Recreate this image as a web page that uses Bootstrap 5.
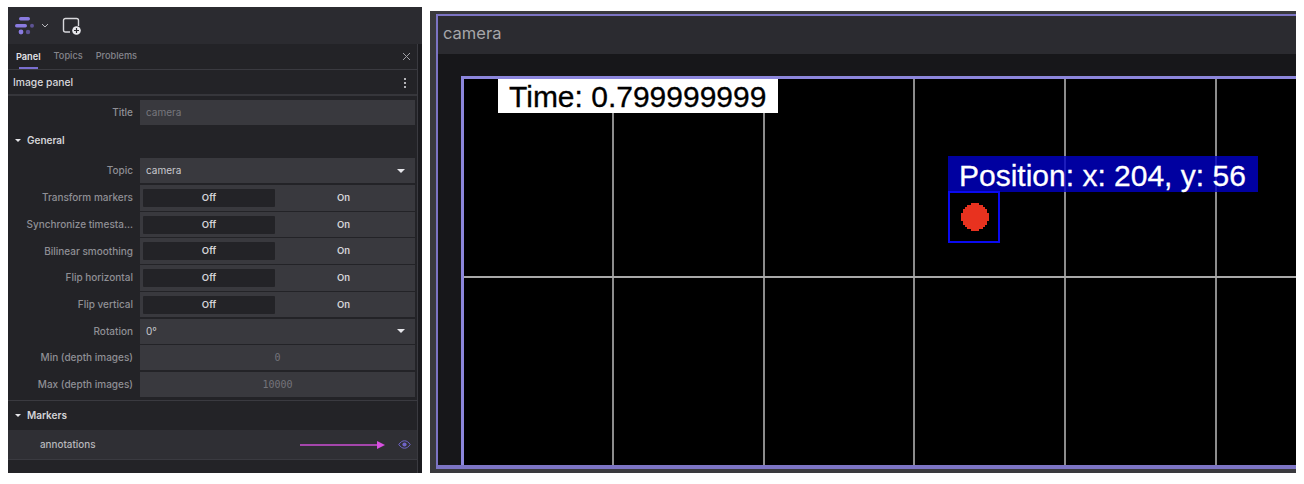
<!DOCTYPE html>
<html lang="en">
<head>
  <meta charset="UTF-8">
  <title>Image panel</title>
  <link href="https://cdn.jsdelivr.net/npm/bootstrap@5.3.3/dist/css/bootstrap.min.css" rel="stylesheet">
  <style>
    html, body { height: 484px; overflow: hidden; background: #fff; }
    body { font-family: Inter, "Liberation Sans", sans-serif; font-size: 10px; color: #d4d4d8; }
    .shot { padding: 7px 8px 11px 8px; height: 484px; gap: 8px; }

    /* left side */
    .side { width: 414px; flex: none; background: #232327; display: flex; flex-direction: column; }
    .topbar { height: 37px; background: #2b2b30; padding-left: 7px; gap: 4px; flex: none; }
    .side-body { flex: 1; display: flex; min-height: 0; }
    .side-main { width: 410px; background: #232327; border-right: 1px solid #3a3a40; display: flex; flex-direction: column; }
    .side-gutter { width: 4px; background: #1b1b1f; }
    .tabs { height: 26px; padding: 0 6px 1px 8px; gap: 13px; border-bottom: 1px solid #3a3a40; flex: none; color: #85858c; font-weight: 500; font-size: 9.2px; }
    .tabs b { color: #e2e2e6; font-weight: 600; position: relative; line-height: 25px; margin-bottom: -1px; }
    .tabs b::after { content: ""; position: absolute; left: 3px; right: 3px; bottom: 0; height: 2px; background: #7a6fd0; }
    .panel-head { height: 26px; padding: 1px 11px 0 5px; border-bottom: 2px solid #36363b; font-size: 10.3px; font-weight: 500; color: #d8d8dc; flex: none; }
    .dots { gap: 2px; }
    .dots i { display: block; width: 2px; height: 2px; background: #e4e4e8; border-radius: 50%; }
    .field-row { display: flex; align-items: center; padding-right: 2px; flex: none; }
    .field-name { width: 132px; text-align: right; padding-right: 7px; color: #8f8f95; font-weight: 500; font-size: 10px; white-space: nowrap; flex: none; }
    .field-box { flex: 1; background: #39393e; height: 100%; display: flex; align-items: center; padding: 0 6px; }
    .dim { color: #77777d; }
    .num { justify-content: center; font-family: "DejaVu Sans Mono", monospace; font-size: 10px; color: #74747a; }
    .caret-down { width: 0; height: 0; border-left: 4px solid transparent; border-right: 4px solid transparent; border-top: 4px solid #e6e6ea; }
    .group-head .caret-down { border-left-width: 3.5px; border-right-width: 3.5px; border-top-width: 3.5px; }
    .picker { justify-content: space-between; padding-right: 10px; color: #c9c9ce; }
    .switch { padding: 3px; font-weight: 600; font-size: 9.5px; color: #d4d4d8; }
    .switch span { flex: 1; text-align: center; line-height: 18px; }
    .switch .off { flex: none; width: 132px; background: #232327; border-radius: 1px; }
    .group-head { gap: 6px; padding-left: 7px; font-weight: 600; font-size: 10px; color: #d4d4d8; flex: none; }
    .general-head { height: 33px; padding-bottom: 2px; }
    .markers-head { height: 30px; margin-top: 3.5px; border-top: 1px solid #3a3a40; }
    .h25 { height: 25px; }
    .h26 { height: 25.7px; margin-top: 1px; }
    .first-switch { margin-top: 2px; }
    .gap-rot { margin-top: 1.5px; }
    .gap-min { margin-top: 1px; }
    .gap-max { margin-top: 2px; }
    .title-row { margin-top: 4px; }
    .marker-row { height: 30px; background: #2f2f34; border-bottom: 1px solid #3a3a40; padding: 0 6px 1px 32px; flex: none; color: #b8b8bd; font-size: 9.9px; font-weight: 500; }
    .arrow-mark { margin-top: 1px; }

    /* right side */
    .viewer { flex: 1; margin-top: 4px; background: #3a3a3e; padding: 3px 0 4px 6px; display: flex; }
    .viewer-in { flex: 1; border: solid #7c74c4; border-width: 2px 0 4px 2px; background: #17171a; display: flex; flex-direction: column; }
    .viewer-title { height: 38px; background: #2b2b30; padding: 0 0 3px 5px; font-size: 16.5px; color: #a6a6aa; flex: none; }
    .viewer-gap { flex: 1; padding: 22px 0 0 23px; display: flex; min-height: 0; }
    .canvas { flex: 1; position: relative; background: #000; border: solid #8c86dc; border-width: 3px 0 0 3px; overflow: hidden; }
    .v-line { position: absolute; top: 0; bottom: 0; width: 2px; background: #8c8c8c; }
    .vl1 { left: 148px; } .vl2 { left: 299px; } .vl3 { left: 449px; } .vl4 { left: 600px; } .vl5 { left: 751px; }
    .h-line { position: absolute; left: 0; right: 0; height: 2px; top: 197px; background: #a8a8a8; }
    .time-tag { position: absolute; left: 34px; top: 0; width: 280px; height: 34px; background: #fff; color: #000; font: 30px/35px "Liberation Sans", sans-serif; padding-left: 11px; white-space: nowrap; -webkit-text-stroke: .3px; }
    .pos-tag { position: absolute; left: 484px; top: 77px; width: 310px; height: 36px; background: rgba(0,0,200,.8); color: #fff; font: 30px/40px "Liberation Sans", sans-serif; padding-left: 11px; white-space: nowrap; -webkit-text-stroke: .3px; }
    .pos-box { position: absolute; left: 484px; top: 112px; width: 52px; height: 52px; border: 2px solid #0a0af0; }
    .ball { position: absolute; left: 497px; top: 124px; }
  </style>
</head>
<body>
  <div class="shot d-flex">
    <div class="side">
      <div class="topbar d-flex align-items-center">
        <svg width="22" height="20" viewBox="0 0 22 20" fill="#8a7be0">
          <rect x="4" y="1" width="11" height="3.4" rx="1.7"/>
          <rect x="0" y="8" width="12" height="3.4" rx="1.7"/>
          <circle cx="17" cy="9.7" r="2" fill="#5d5394"/>
          <circle cx="6" cy="16" r="2.4"/>
          <circle cx="13" cy="16" r="2.2" fill="#5d5394"/>
        </svg>
        <svg width="8" height="6" viewBox="0 0 8 6" fill="none" stroke="#b8b8bd" stroke-width="1"><path d="M1 1l3 3 3-3"/></svg>
        <svg class="ms-2" width="22" height="20" viewBox="0 0 22 20" fill="none">
          <path d="M9 16H4.500a2 2 0 0 1-2-2V4.500a2 2 0 0 1 2-2h11a2 2 0 0 1 2 2V10" stroke="#d8d8dc" stroke-width="1.400"/>
          <circle cx="15.500" cy="14.500" r="4.300" fill="#e8e8ec"/>
          <path d="M15.500 12v5M13 14.500h5" stroke="#2b2b30" stroke-width="1.200"/>
        </svg>
      </div>
      <div class="side-body">
        <div class="side-main">
          <div class="tabs d-flex align-items-center">
            <b>Panel</b><span>Topics</span><span>Problems</span>
            <svg class="ms-auto" width="9" height="9" viewBox="0 0 9 9" stroke="#a0a0a5" stroke-width="1"><path d="M1 1l7 7M8 1l-7 7"/></svg>
          </div>
          <div class="panel-head d-flex align-items-center justify-content-between">
            <span>Image panel</span>
            <span class="dots d-flex flex-column"><i></i><i></i><i></i></span>
          </div>
          <div class="field-row h25 title-row"><div class="field-name">Title</div><div class="field-box dim">camera</div></div>
          <div class="group-head general-head d-flex align-items-center"><span class="caret-down"></span>General</div>
          <div class="field-row h25"><div class="field-name">Topic</div><div class="field-box picker">camera<span class="caret-down"></span></div></div>
          <div class="field-row h26 first-switch"><div class="field-name">Transform markers</div><div class="field-box switch"><span class="off">Off</span><span>On</span></div></div>
          <div class="field-row h26"><div class="field-name">Synchronize timesta...</div><div class="field-box switch"><span class="off">Off</span><span>On</span></div></div>
          <div class="field-row h26"><div class="field-name">Bilinear smoothing</div><div class="field-box switch"><span class="off">Off</span><span>On</span></div></div>
          <div class="field-row h26"><div class="field-name">Flip horizontal</div><div class="field-box switch"><span class="off">Off</span><span>On</span></div></div>
          <div class="field-row h26"><div class="field-name">Flip vertical</div><div class="field-box switch"><span class="off">Off</span><span>On</span></div></div>
          <div class="field-row h25 gap-rot"><div class="field-name">Rotation</div><div class="field-box picker">0°<span class="caret-down"></span></div></div>
          <div class="field-row h25 gap-min"><div class="field-name">Min (depth images)</div><div class="field-box num">0</div></div>
          <div class="field-row h25 gap-max"><div class="field-name">Max (depth images)</div><div class="field-box num">10000</div></div>
          <div class="group-head markers-head d-flex align-items-center"><span class="caret-down"></span>Markers</div>
          <div class="marker-row d-flex align-items-center justify-content-between">
            <span>annotations</span>
            <span class="arrow-mark d-flex align-items-center gap-2">
              <svg width="86" height="8" viewBox="0 0 86 8" fill="#d850e0"><rect x="0" y="3.300" width="78" height="1.400"/><path d="M77 0l8 4-8 4z"/></svg>
              <svg class="ms-1" width="13" height="9" viewBox="0 0 13 9" fill="none"><path d="M.8 4.500C2.500 2 4.300.8 6.500.8s4 1.200 5.700 3.700c-1.700 2.500-3.500 3.700-5.700 3.700S2.500 7 .8 4.500z" stroke="#6f64c8" stroke-width="1"/><circle cx="6.500" cy="4.500" r="2.100" fill="#6f64c8"/></svg>
            </span>
          </div>
        </div>
        <div class="side-gutter"></div>
      </div>
    </div>

    <div class="viewer">
      <div class="viewer-in">
        <div class="viewer-title d-flex align-items-center">camera</div>
        <div class="viewer-gap">
          <div class="canvas">
            <div class="v-line vl1"></div>
            <div class="v-line vl2"></div>
            <div class="v-line vl3"></div>
            <div class="v-line vl4"></div>
            <div class="v-line vl5"></div>
            <div class="h-line"></div>
            <div class="time-tag">Time: 0.799999999</div>
            <div class="pos-tag">Position: x: 204, y: 56</div>
            <div class="pos-box"></div>
            <svg class="ball" width="28" height="28" viewBox="0 0 14 14" fill="#e8321f" shape-rendering="crispEdges"><path d="M5 0h4v1h2v1h1v1h1v2h1v4h-1v2h-1v1h-1v1h-2v1H5v-1H3v-1H2v-1H1V9H0V5h1V3h1V2h1V1h2z"/></svg>
          </div>
        </div>
      </div>
    </div>
  </div>
  <script src="https://cdn.jsdelivr.net/npm/bootstrap@5.3.3/dist/js/bootstrap.bundle.min.js"></script>
</body>
</html>
